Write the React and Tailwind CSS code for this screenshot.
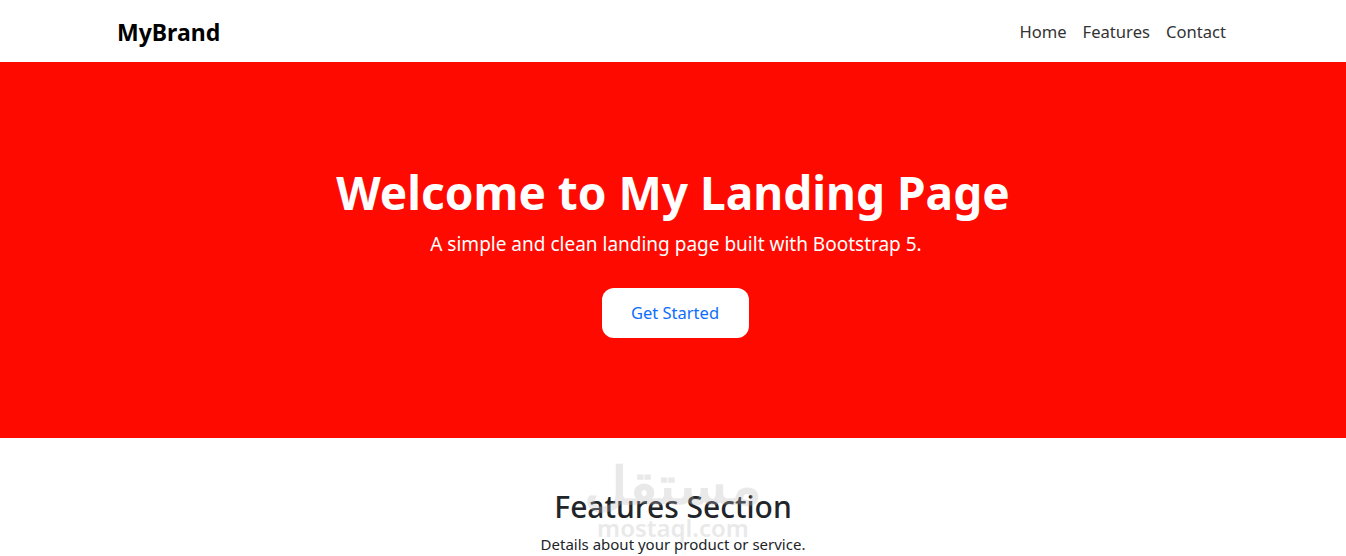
export default function App() {
  const font = { fontFamily: '"Segoe UI", "Noto Sans", "Liberation Sans", sans-serif' };
  return (
    <div className="min-h-screen bg-white text-[#212529]" style={font}>
      {/* top navbar */}
      <nav className="h-[62px] bg-white">
        <div className="mx-auto flex h-full max-w-[1140px] items-center justify-between pl-[14px] pr-[9px] pt-[2px]">
          <a className="text-[23px] font-bold text-black">MyBrand</a>
          <ul className="flex text-[16.6px] text-[#333]">
            <li className="px-2">Home</li>
            <li className="px-2">Features</li>
            <li className="px-2">Contact</li>
          </ul>
        </div>
      </nav>

      {/* hero */}
      <header className="bg-[#ff0a00] pt-[102px] pb-[100px] text-center text-white">
        <h1 className="mb-2 text-[46px] font-bold leading-[1.25]">Welcome to My Landing Page</h1>
        <p className="pl-[6px] text-[19px] leading-[1.5]">A simple and clean landing page built with Bootstrap 5.</p>
        <button className="ml-[4px] mt-[30px] h-[50px] w-[147px] rounded-[12px] bg-white text-[16.5px] text-[#0d6efd]">
          Get Started
        </button>
      </header>

      {/* features */}
      <section className="relative pt-[51px] text-center">
        <h2 className="mb-2 text-[30px] font-medium leading-[1.2]">Features Section</h2>
        <p className="text-[15px] leading-[1.5]">Details about your product or service.</p>
        <div className="pointer-events-none absolute left-1/2 top-[20px] flex -translate-x-1/2 flex-col items-center text-[#b8b8b8] opacity-30">
          <span className="scale-x-[1.15] text-[52px] font-bold leading-none" style={{ fontFamily: '"Noto Sans", sans-serif' }}>مستقل</span>
          <span className="mt-[6px] text-[24px] font-semibold leading-none">mostaql.com</span>
        </div>
      </section>
    </div>
  );
}
